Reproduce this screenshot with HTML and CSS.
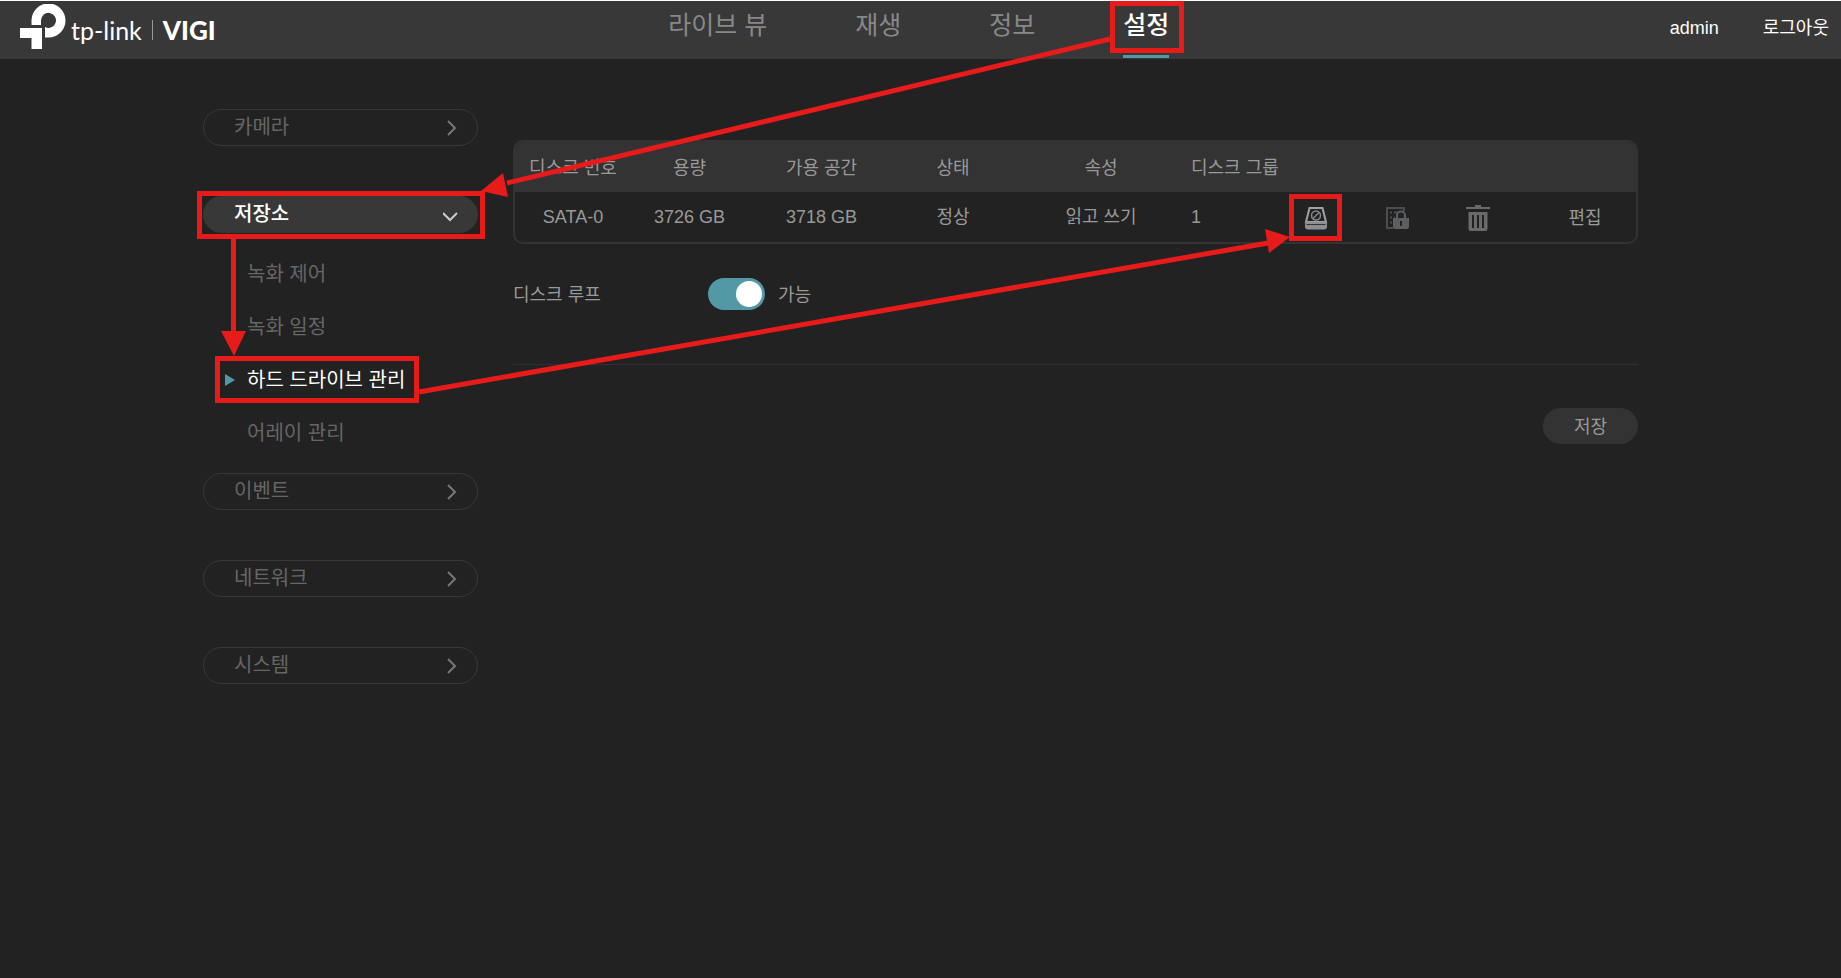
FILE: index.html
```html
<!DOCTYPE html>
<html lang="ko">
<head>
    <meta charset="UTF-8">
    <meta name="viewport" content="width=device-width, initial-scale=1.0">
    <title>VIGI</title>
    <link rel="stylesheet" href="styles.css">
</head>
<body>
    <header class="header">
        <a class="logo" href="#">
            <svg class="logo-mark" viewBox="0 0 46 46" aria-hidden="true">
                <path d="M11.500 21V16.500A17 17 0 1 1 28.500 33.500H25V23A7.500 7.500 0 1 0 21 16.500V21Z" fill="#fff"/>
                <path d="M0 24H22V45H11.500V34H0Z" fill="#fff"/>
            </svg>
            <span class="logo-name">tp-link</span>
            <span class="logo-line"></span>
            <span class="logo-brand">VIGI</span>
        </a>
        <nav class="nav">
            <a href="#">라이브 뷰</a>
            <a href="#">재생</a>
            <a href="#">정보</a>
            <a class="active" href="#">설정</a>
        </nav>
        <div class="user">
            <span>admin</span>
            <a href="#">로그아웃</a>
        </div>
    </header>

    <div class="page">
        <aside class="sidebar">
            <button class="menu" type="button">카메라
                <svg class="arrow" viewBox="0 0 16 16"><path d="M5 1l7 7-7 7"/></svg>
            </button>
            <div class="group">
                <button class="menu open" type="button">저장소
                    <svg class="arrow" viewBox="0 0 16 16"><path d="M0 6l7 7 7-7"/></svg>
                </button>
                <ul class="submenu">
                    <li><a href="#">녹화 제어</a></li>
                    <li><a href="#">녹화 일정</a></li>
                    <li><a class="active" href="#">하드 드라이브 관리</a></li>
                    <li><a href="#">어레이 관리</a></li>
                </ul>
                <button class="menu" type="button">이벤트
                    <svg class="arrow" viewBox="0 0 16 16"><path d="M5 1l7 7-7 7"/></svg>
                </button>
            </div>
            <button class="menu" type="button">네트워크
                <svg class="arrow" viewBox="0 0 16 16"><path d="M5 1l7 7-7 7"/></svg>
            </button>
            <button class="menu" type="button">시스템
                <svg class="arrow" viewBox="0 0 16 16"><path d="M5 1l7 7-7 7"/></svg>
            </button>
        </aside>

        <main class="content">
            <div class="table-box">
                <table class="disks">
                    <colgroup>
                        <col class="c-disk"><col class="c-size"><col class="c-free"><col class="c-state"><col class="c-attr"><col class="c-group"><col class="c-icon"><col class="c-icon"><col class="c-icon"><col>
                    </colgroup>
                    <thead>
                        <tr>
                            <th>디스크 번호</th>
                            <th>용량</th>
                            <th>가용 공간</th>
                            <th>상태</th>
                            <th>속성</th>
                            <th class="left">디스크 그룹</th>
                            <th colspan="4"></th>
                        </tr>
                    </thead>
                    <tbody>
                        <tr>
                            <td>SATA-0</td>
                            <td>3726 GB</td>
                            <td>3718 GB</td>
                            <td>정상</td>
                            <td>읽고 쓰기</td>
                            <td class="left">1</td>
                            <td>
                                <button class="icon-btn" type="button" aria-label="포맷">
                                    <svg viewBox="0 0 24 24">
                                        <path d="M5.500 2h13l3.500 14h-20z" fill="none" stroke="#a0a3a5" stroke-width="2"/>
                                        <path d="M1 16h22v4.500a3 3 0 0 1-3 3h-16a3 3 0 0 1-3-3z" fill="#8c8f91"/>
                                        <path d="M2.500 18.500h19" stroke="#333" stroke-width="1"/>
                                        <circle cx="12" cy="9.500" r="4.500" fill="none" stroke="#85888a" stroke-width="1.500"/>
                                        <path d="M9 12.500l6-6" stroke="#85888a" stroke-width="1.500"/>
                                    </svg>
                                </button>
                            </td>
                            <td>
                                <button class="icon-btn" type="button" aria-label="잠금">
                                    <svg viewBox="0 0 24 24">
                                        <path d="M19 5V2H2v20h6" fill="none" stroke="#4b4d4f" stroke-width="2"/>
                                        <path d="M5 6.500h2m2 0h4M5 11.500h2m2 0h1M5 16.500h2" stroke="#4b4d4f" stroke-width="2"/>
                                        <path d="M12 13V9.500a4 4 0 0 1 8 0V13" fill="none" stroke="#5d5f61" stroke-width="2"/>
                                        <path d="M8 12h16v9a2 2 0 0 1-2 2H10a2 2 0 0 1-2-2z" fill="#5d5f61"/>
                                        <path d="M16 15v5" stroke="#222" stroke-width="2"/>
                                    </svg>
                                </button>
                            </td>
                            <td>
                                <button class="icon-btn" type="button" aria-label="삭제">
                                    <svg class="trash" viewBox="0 0 24 28">
                                        <path d="M9 3V1h6v2h9v2H0V3z" fill="#6a6a6a"/>
                                        <path d="M2.500 8h19v17a2 2 0 0 1-2 2h-15a2 2 0 0 1-2-2z" fill="#6a6a6a"/>
                                        <path d="M7 11v13M12 11v13M17 11v13" stroke="#222" stroke-width="2"/>
                                    </svg>
                                </button>
                            </td>
                            <td class="last"><button type="button">편집</button></td>
                        </tr>
                    </tbody>
                </table>
            </div>

            <div class="loop">
                <label class="loop-label" for="loop">디스크 루프</label>
                <input class="switch" id="loop" type="checkbox" checked>
                <label for="loop">가능</label>
            </div>

            <div class="actions">
                <button class="save" type="button">저장</button>
            </div>
        </main>

        <!-- guide: boxes and arrows over the click path -->
        <svg class="guide" viewBox="0 0 1435 420" aria-hidden="true">
            <g fill="none" stroke="#e81b1b" stroke-width="5">
                <path d="M909.500 3.500h69v47h-69z"/>
                <path d="M-3.500 193.500h283v43h-283z"/>
                <path d="M14.500 358.500h199v42h-199z"/>
                <path d="M1088.500 196.500h48v42h-48z"/>
                <path d="M907 39L304 183"/>
                <path d="M30.500 239v95"/>
                <path d="M216 392L1065 243"/>
            </g>
            <g fill="#e81b1b">
                <path d="M278 191l22-18 5 24z"/>
                <path d="M18 331h25l-12 25z"/>
                <path d="M1087 237l-25-8 4 24z"/>
            </g>
        </svg>
    </div>
</body>
</html>
```
FILE: styles.css
```css
* { box-sizing: border-box; }
body { margin: 0; min-height: 100vh; background: #222; color: #999; font-family: "Liberation Sans", "Noto Sans CJK KR", sans-serif; font-size: 18px; line-height: 24px; border-top: 1px solid #fff; }
a { color: inherit; text-decoration: none; }
button { font: inherit; color: inherit; background: none; border: 0; padding: 0; cursor: pointer; }

.header { display: flex; height: 58px; padding: 0 12px 0 20px; background: #383838; }
.logo { display: flex; align-items: center; width: 200px; color: #fff; }
.logo-mark { width: 46px; height: 46px; flex: none; margin-bottom: 6px; }
.logo-name { margin-left: 5px; font-family: Lato, sans-serif; font-size: 25px; }
.logo-line { width: 1px; height: 20px; margin: 0 10px; background: #999; }
.logo-brand { font-family: Lato, sans-serif; font-size: 26px; font-weight: 900; }
.nav { flex: 1; display: flex; justify-content: center; gap: 88px; padding-right: 52px; font-size: 25px; line-height: 48px; color: #888; }
.nav a { height: 57px; }
.nav .active { color: #fff; font-weight: 500; border-bottom: 3px solid #5299a5; }
.user { display: flex; align-items: center; gap: 44px; padding-bottom: 4px; color: #fff; }

.page { display: flex; gap: 35px; width: 1435px; max-width: 100%; margin: 0 auto; padding-top: 50px; position: relative; }
.sidebar { display: flex; flex-direction: column; gap: 50px; width: 275px; flex: none; font-size: 20px; color: #666; }
.menu { display: flex; justify-content: space-between; align-items: center; width: 100%; height: 37px; padding: 0 18px 2px 30px; border: 1px solid #383838; border-radius: 19px; }
.arrow { width: 16px; height: 16px; margin-top: 2px; fill: none; stroke: #777; stroke-width: 2; }
.open { color: #fff; font-weight: 500; background: #383838; }
.open .arrow { stroke: #ccc; }
.submenu { list-style: none; margin: 0; padding: 14px 0 14px 22px; }
.submenu a { display: flex; align-items: center; height: 53px; padding-left: 22px; }
.submenu .active { padding-left: 0; color: #fff; }
.submenu .active::before { content: ""; margin-right: 12px; border: 6px solid transparent; border-left: 10px solid #5299a5; border-right: 0; }

.content { flex: 1; min-width: 0; padding-top: 31px; }
.table-box { border: 2px solid #333; border-radius: 10px; overflow: hidden; }
.disks { width: 100%; table-layout: fixed; border-collapse: collapse; white-space: nowrap; }
.disks th { height: 50px; padding: 2px 0 0; background: #333; font-weight: 400; }
.disks td { height: 50px; padding: 0; text-align: center; }
.disks .left { text-align: left; }
.disks .last { padding: 2px 0 0 16px; }
.c-disk { width: 116px; }
.c-size { width: 117px; }
.c-free { width: 147px; }
.c-state { width: 116px; }
.c-attr { width: 180px; }
.c-group { width: 84px; }
.c-icon { width: 81px; }
.icon-btn { display: block; margin: 2px auto 0; }
.icon-btn svg { display: block; width: 24px; height: 24px; }
.icon-btn .trash { height: 28px; }

.loop { display: flex; align-items: center; padding: 34px 0 54px; border-bottom: 1px solid #303030; }
.loop label { padding-top: 2px; }
.loop-label { width: 195px; }
.switch { appearance: none; width: 57px; height: 32px; margin: 0 13px 0 0; padding: 3px; border-radius: 16px; background: #5299a5; display: flex; justify-content: flex-end; }
.switch::before { content: ""; width: 26px; height: 26px; border-radius: 50%; background: #fff; }
.switch:not(:checked) { background: #555; justify-content: flex-start; }
.actions { display: flex; justify-content: flex-end; padding-top: 43px; }
.save { width: 95px; height: 36px; padding-top: 2px; border-radius: 18px; background: #333; }

.guide { position: absolute; left: 0; top: -59px; width: 1435px; height: 420px; overflow: visible; pointer-events: none; }
```
